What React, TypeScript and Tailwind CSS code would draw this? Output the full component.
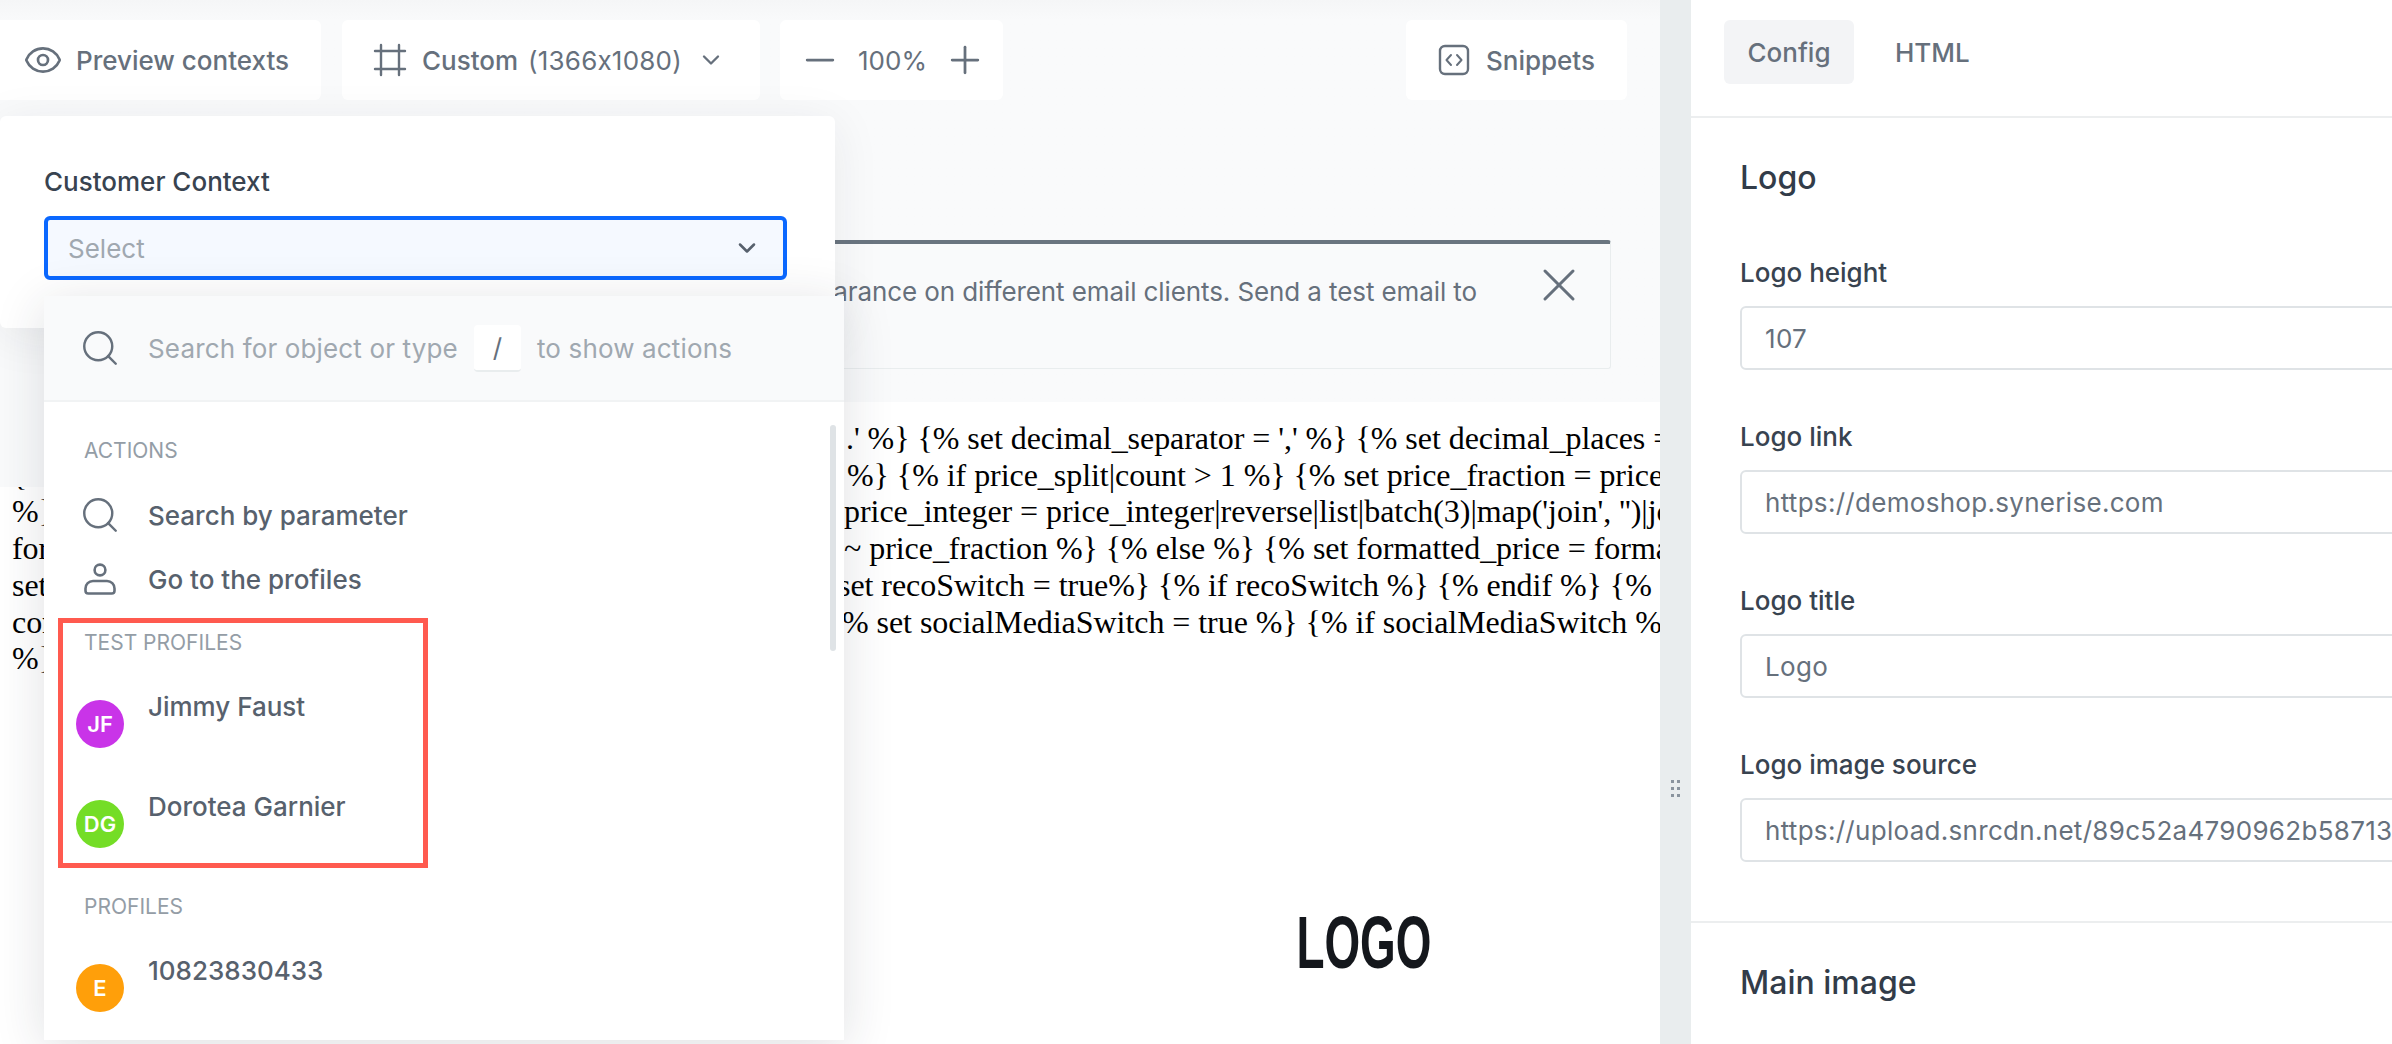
import { ChevronDown, Eye, Frame, Minus, Plus, Search, X } from 'lucide-react';

const emailLines = [
  { left: "{% set currency = 'USD' %} {% set price = item.price %} {% set thousands_separator = '", right: ".' %} {% set decimal_separator = ',' %} {% set decimal_places = 2 %} {% set price_split", offset: 'ml-[14px]' },
  { left: '{% set price_split = price|round(decimal_places)|string|split(".") %} {% set price_integer = price_split[0]', right: "%} {% if price_split|count > 1 %} {% set price_fraction = price_split[1] %} {% endif %}", offset: 'ml-[15px]' },
  { left: "%} {% set price_integer = price_integer|reverse|join %} {% if price_integer %} {% set", right: "price_integer = price_integer|reverse|list|batch(3)|map('join', '')|join(thousands)", offset: 'ml-[12px]' },
  { left: 'formatted_price = price_integer ~ decimal_separator %} {% if price_fraction %} {% set', right: '~ price_fraction %} {% else %} {% set formatted_price = formatted_price %} {% endif %}', offset: 'ml-[12px]' },
  { left: 'set sectionSwitch = true %} {% if sectionSwitch %} {% endif %} {% ', right: 'set recoSwitch = true%} {% if recoSwitch %} {% endif %} {% set footerSwitch = true %}', offset: 'ml-[6px]' },
  { left: 'contentSwitch = true %} {% if contentSwitch %} {% endif %} {', right: '% set socialMediaSwitch = true %} {% if socialMediaSwitch %} {% endif %} {% endif %}', offset: 'ml-[10px]' },
  { left: '%}', right: '', offset: '' },
];

const fields = [
  { label: 'Logo height', value: '107' },
  { label: 'Logo link', value: 'https://demoshop.synerise.com' },
  { label: 'Logo title', value: 'Logo' },
  { label: 'Logo image source', value: 'https://upload.snrcdn.net/89c52a4790962b58713f0a7d4e1' },
];

function ToolbarButton({ className, children }: { className: string; children: React.ReactNode }) {
  return (
    <div className={`h-20 flex items-center bg-white rounded-[6px] text-[26px] text-[#66707c] ${className}`}>
      {children}
    </div>
  );
}

function SectionLabel({ className, children }: { className: string; children: React.ReactNode }) {
  return <p className={`pl-10 text-[21px] leading-[24px] text-[#949da6] uppercase ${className}`}>{children}</p>;
}

function ActionRow({ icon, children }: { icon: React.ReactNode; children: React.ReactNode }) {
  return (
    <div className="h-16 pl-10 flex items-center gap-8 text-[26px] font-medium text-[#57616d]">
      <span className="w-8 h-8 flex-shrink-0 text-[#66707c]">{icon}</span>
      <span>{children}</span>
    </div>
  );
}

function ProfileRow({ initials, color, name }: { initials: string; color: string; name: string }) {
  return (
    <div className="h-[100px] pl-8 flex items-start gap-[24px]">
      <span className={`w-12 h-12 mt-[20px] rounded-full flex items-center justify-center text-[22px] font-semibold text-white ${color}`}>
        {initials}
      </span>
      <span className="mt-[8px] leading-[38px] text-[26px] font-medium text-[#57616d]">{name}</span>
    </div>
  );
}

export default function App() {
  return (
    <div className="relative flex w-[2392px] h-[1044px] overflow-hidden bg-white font-['Inter',sans-serif] [font-feature-settings:'calt'_0]">

      {/* ── Editor ─────────────────────── */}
      <main className="w-[1660px] flex-shrink-0 flex flex-col overflow-hidden">
        <div className="h-[402px] flex-shrink-0 bg-[#f9fafb] bg-gradient-to-b from-[#f5f6f7] to-[#f9fafb] to-[20px]">
          <div className="flex pt-5">
            <ToolbarButton className="-ml-3 w-[333px] pl-[35px] gap-[13px] font-medium">
              <Eye className="w-10 h-10" strokeWidth={1.6} />
              <span>Preview contexts</span>
            </ToolbarButton>
            <ToolbarButton className="ml-[21px] w-[418px] pl-[30px] font-medium">
              <Frame className="w-9 h-9" strokeWidth={1.6} />
              <span className="ml-[14px]">Custom</span>
              <span className="ml-[10px] font-normal tracking-[0.2px]">(1366x1080)</span>
              <ChevronDown className="ml-[15px] w-7 h-7" strokeWidth={2} />
            </ToolbarButton>
            <ToolbarButton className="ml-5 w-[223px] pl-[18px] gap-[16px]">
              <Minus className="w-11 h-11" strokeWidth={1.5} />
              <span>100%</span>
              <Plus className="w-11 h-11" strokeWidth={1.5} />
            </ToolbarButton>
            <ToolbarButton className="ml-auto mr-[33px] pl-8 pr-8 gap-4 font-medium">
              <svg viewBox="0 0 32 32" className="w-8 h-8" fill="none" stroke="currentColor" strokeWidth="2.4">
                <rect x="2" y="2" width="28" height="28" rx="5" />
                <path d="M13 11l-4.5 5 4.5 5M19 11l4.5 5-4.5 5" strokeWidth="2" strokeLinecap="round" strokeLinejoin="round" />
              </svg>
              <span>Snippets</span>
            </ToolbarButton>
          </div>

          {/* Info banner */}
          <div className="mt-[140px] mr-[49px] ml-3 h-[129px] flex bg-[#f9fafb] border border-[#e9edee] border-t-4 border-t-[#6a7580] rounded-[3px]">
            <p className="flex-1 min-w-0 pt-[29px] pr-[54px] text-right whitespace-nowrap overflow-hidden text-[26px] leading-[38px] tracking-[-0.1px] text-[#66707c]">
              Check how the template looks and verify its appearance on different email clients. Send a test email to
            </p>
            <X className="w-14 h-14 mt-[13px] mr-[23px] flex-shrink-0 text-[#66707c]" strokeWidth={1.3} />
          </div>
        </div>

        <div className="pt-[18px] pl-3 text-[32px] leading-[36.7px] tracking-[-0.05px] text-black font-['Liberation_Serif',serif]">
          {emailLines.map((line, i) => (
            <div key={i} className="flex whitespace-nowrap">
              <span className="w-[820px] flex-shrink-0 overflow-hidden">{line.left}</span>
              <span className={line.offset}>{line.right}</span>
            </div>
          ))}
          <div className="mt-[236px] ml-[1287px] w-[129px] flex justify-center">
            <span className="scale-x-[0.62] text-[74px] leading-[60px] tracking-normal font-bold text-[#14171c] font-['Liberation_Sans',sans-serif]">LOGO</span>
          </div>
        </div>
      </main>

      {/* ── Gutter ─────────────────────── */}
      <div className="relative w-[31px] flex-shrink-0 bg-[#e9edee]">
        <div className="absolute top-[780px] left-[11px] grid grid-cols-2 gap-x-[3px] gap-y-[4px]">
          {[0, 1, 2, 3, 4, 5].map((i) => (
            <span key={i} className="w-[3px] h-[3px] bg-[#8a949e]" />
          ))}
        </div>
      </div>

      {/* ── Config panel ─────────────────────── */}
      <aside className="flex-1 min-w-0 overflow-hidden bg-white">
        <div className="h-[118px] pt-5 pl-[33px] flex items-start gap-[41px] border-b-2 border-[#eceeef] text-[26px] font-medium text-[#66707c]">
          <div className="w-[130px] h-16 flex items-center justify-center bg-[#f3f4f6] rounded-[6px]">Config</div>
          <div className="h-16 flex items-center">HTML</div>
        </div>

        <div className="h-[805px] pl-[49px] border-b-2 border-[#eceeef]">
          <h2 className="pt-[38px] pb-[54px] text-[32px] leading-[44px] font-medium text-[#323c49]">Logo</h2>
          {fields.map((f) => (
            <div key={f.label} className="mb-[48px]">
              <p className="mb-[14px] text-[26px] leading-[38px] font-medium text-[#384350] whitespace-nowrap">{f.label}</p>
              <div className="w-[900px] h-16 pl-[23px] flex items-center bg-white border-2 border-[#dfe3e6] rounded-[6px] text-[26px] tracking-[0.3px] text-[#66707c] whitespace-nowrap overflow-hidden">
                {f.value}
              </div>
            </div>
          ))}
        </div>

        <h2 className="pl-[49px] pt-[38px] text-[32px] leading-[44px] font-medium text-[#323c49]">Main image</h2>
      </aside>

      {/* ── Leftover of the editor chrome over the email ── */}
      <div className="absolute left-0 top-[328px] w-[44px] h-[159px] bg-[#f9fafb]" />

      {/* ── Context panel ─────────────────────── */}
      <div className="absolute left-0 top-[116px] w-[835px] h-[212px] pl-[44px] bg-white rounded-[6px] shadow-[0_8px_48px_rgba(35,41,54,0.08)]">
        <p className="mt-[46px] text-[26px] leading-[40px] font-medium text-[#384350]">Customer Context</p>
        <div className="mt-[14px] w-[743px] h-16 pl-[20px] pr-[22px] flex items-center justify-between bg-[#f5f9ff] border-4 border-[#0b68ff] rounded-[6px]">
          <span className="text-[26px] text-[#a0a8b0]">Select</span>
          <ChevronDown className="w-7 h-7 text-[#57616d]" strokeWidth={2.2} />
        </div>
      </div>

      {/* ── Dropdown ─────────────────────── */}
      <div className="absolute left-[44px] top-[296px] w-[800px] h-[744px] bg-white shadow-[0_8px_48px_rgba(35,41,54,0.14)]">
        <div className="h-[106px] pl-10 flex items-center bg-[#f9fafb] border-b-2 border-[#f1f3f4] text-[26px] tracking-[0.15px] text-[#a0a8b0]">
          <Search className="w-[42px] h-[42px] -ml-[5px] text-[#66707c]" strokeWidth={1.4} />
          <span className="ml-[27px]">Search for object or type</span>
          <span className="ml-[16px] w-[47px] h-[47px] flex items-center justify-center bg-white border-b-2 border-[#e9edee] rounded-[4px] text-[#66707c]">/</span>
          <span className="ml-[16px]">to show actions</span>
        </div>

        <SectionLabel className="mt-[37px] mb-[20px]">Actions</SectionLabel>
        <ActionRow icon={<Search className="w-[42px] h-[42px] -ml-[5px] -mt-[5px]" strokeWidth={1.4} />}>Search by parameter</ActionRow>
        <ActionRow
          icon={
            <svg viewBox="0 0 32 32" className="w-8 h-8" fill="none" stroke="currentColor" strokeWidth="2.6">
              <circle cx="16" cy="7" r="5.4" />
              <path d="M9 18h14a7.5 7.5 0 0 1 7.5 7.5v2.2a2.8 2.8 0 0 1-2.8 2.8H4.3a2.8 2.8 0 0 1-2.8-2.8v-2.2A7.5 7.5 0 0 1 9 18z" />
            </svg>
          }
        >
          Go to the profiles
        </ActionRow>

        <SectionLabel className="mt-[20px] mb-[25px]">Test profiles</SectionLabel>
        <ProfileRow initials="JF" color="bg-[#c934e8]" name="Jimmy Faust" />
        <ProfileRow initials="DG" color="bg-[#74dd26]" name="Dorotea Garnier" />
        <SectionLabel className="mt-[15px] mb-[25px]">Profiles</SectionLabel>
        <ProfileRow initials="E" color="bg-[#ff9f0a]" name="10823830433" />

        {/* Scrollbar */}
        <div className="absolute left-[786px] top-[129px] w-[6px] h-[226px] rounded-full bg-[#dfe3e6]" />
      </div>

      {/* Highlight frame from the annotated screenshot */}
      <div className="absolute left-[58px] top-[618px] w-[370px] h-[250px] border-[5px] border-[#ff5a4f]" />
    </div>
  );
}
